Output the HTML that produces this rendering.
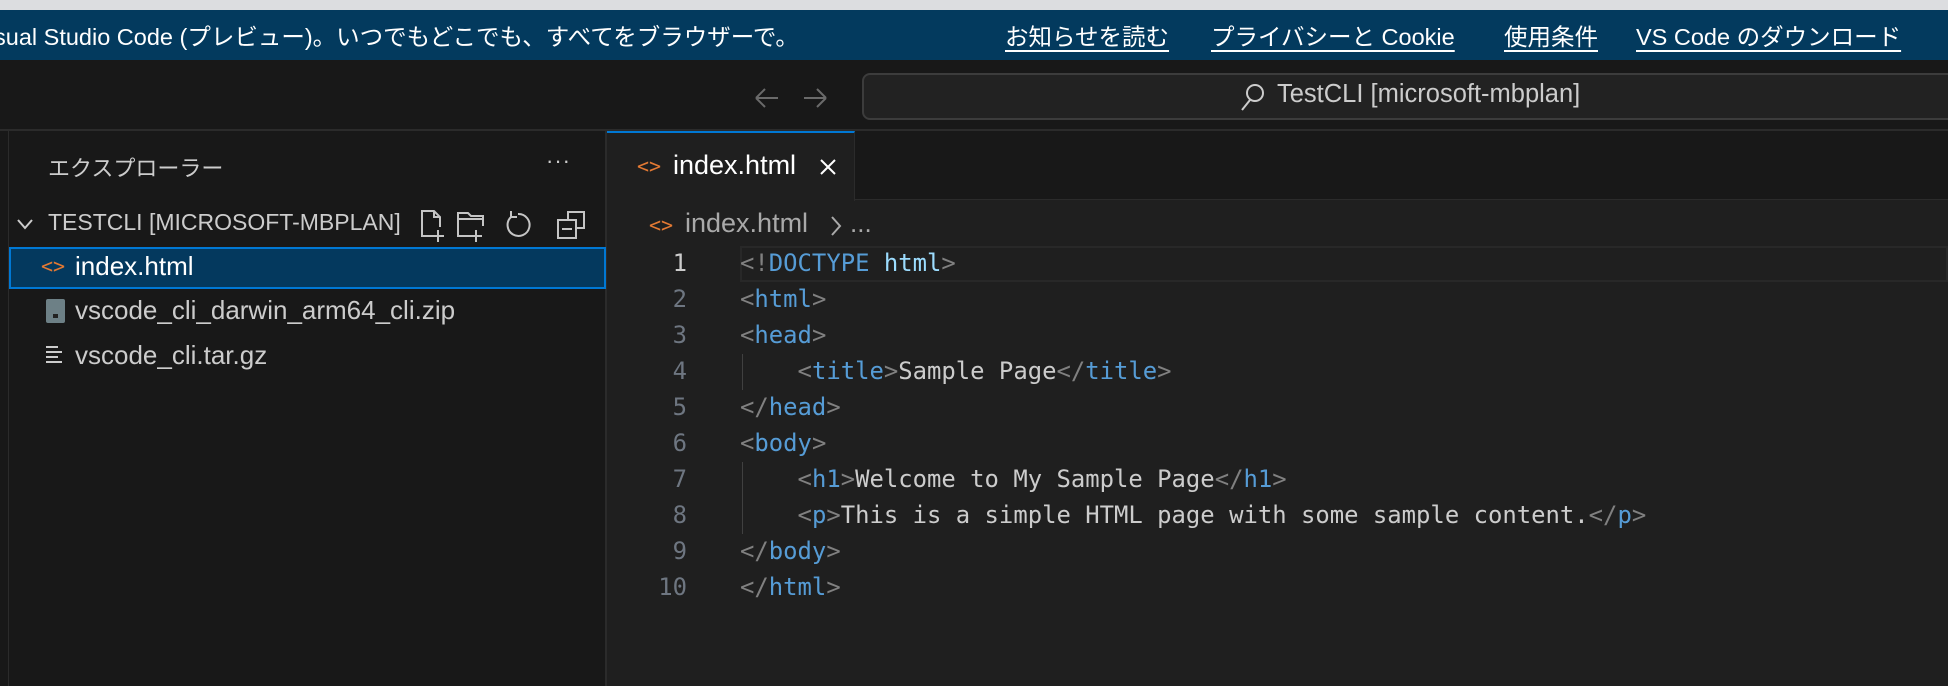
<!DOCTYPE html>
<html><head><meta charset="utf-8"><style>
*{margin:0;padding:0;box-sizing:border-box}
body{width:1948px;height:686px;overflow:hidden;background:#181818;font-family:"Liberation Sans","Noto Sans CJK JP",sans-serif;position:relative;color:#ccc}
.a{position:absolute;white-space:pre}
.mono{font-family:"DejaVu Sans Mono","Liberation Mono",monospace;font-size:23.9px}
.p{color:#808080}.t{color:#569cd6}.at{color:#9cdcfe}.x{color:#cccccc}
.ln{position:absolute;left:600px;width:87px;text-align:right;color:#6e7681}
.cl{position:absolute;left:740px}
.bl{font-size:23.5px;color:#fff;text-decoration:underline;text-underline-offset:5px;top:18px}
</style></head><body>
<div class="a" style="left:0;top:0;width:1948px;height:10px;background:#dcdde0"></div>
<div class="a" style="left:0;top:10px;width:1948px;height:50px;background:#033a5e"></div>
<div class="a" style="left:-6px;top:18px;font-size:23.5px;color:#fff">sual Studio Code (プレビュー)。いつでもどこでも、すべてをブラウザーで。</div>
<div class="a bl" style="left:1005px">お知らせを読む</div>
<div class="a bl" style="left:1211px">プライバシーと Cookie</div>
<div class="a bl" style="left:1504px">使用条件</div>
<div class="a bl" style="left:1636px">VS Code のダウンロード</div>
<div class="a" style="left:0;top:129px;width:1948px;height:2px;background:#2b2b2b"></div>
<svg class="a" style="left:752px;top:84px" width="80" height="28" viewBox="0 0 80 28" fill="none" stroke="#6a6a6a" stroke-width="2"><path d="M4 14h22M4 14l9-9M4 14l9 9"/><path d="M52 14h22M74 14l-9-9M74 14l-9 9"/></svg>
<div class="a" style="left:862px;top:73px;width:1100px;height:47px;background:#222;border:2px solid #3c3c3c;border-radius:8px"></div>
<svg class="a" style="left:1240px;top:82px" width="26" height="30" viewBox="0 0 26 30" fill="none" stroke="#ccc" stroke-width="2"><circle cx="15" cy="11" r="8"/><path d="M10 18L2 28"/></svg>
<div class="a" style="left:1277px;top:80px;font-size:25.5px;color:#ccc">TestCLI [microsoft-mbplan]</div>
<div class="a" style="left:8px;top:131px;width:1px;height:555px;background:#2b2b2b"></div>
<div class="a" style="left:605px;top:131px;width:2px;height:555px;background:#2b2b2b"></div>
<div class="a" style="left:48px;top:151px;font-size:22px;color:#ccc">エクスプローラー</div>
<div class="a" style="left:546px;top:148px;font-size:22px;color:#ccc;letter-spacing:1px">···</div>
<svg class="a" style="left:16px;top:217px" width="18" height="14" viewBox="0 0 18 14" fill="none" stroke="#ccc" stroke-width="2"><path d="M2 3l7 8 7-8"/></svg>
<div class="a" style="left:48px;top:209px;font-size:23px;color:#ccc">TESTCLI [MICROSOFT-MBPLAN]</div>
<svg class="a" style="left:418px;top:208px" width="180" height="36" viewBox="0 0 180 36" fill="none" stroke="#c5c5c5" stroke-width="2"><path d="M16 28H4V3h12l6 6v10M16 3v6h6M20 22v12M14 28h12"/><path d="M48 28H52H40V5h10l3 3h12v10M40 11h25M58 22v12M52 28h12"/><path d="M100 6a11 11 0 1 1-7 3M93 3v6h6"/><path d="M140 12h10v-8h16v16h-8M140 12h18v18h-18zM144 21h10"/></svg>
<div class="a" style="left:9px;top:247px;width:597px;height:42px;background:#04395e;border:2px solid #0078d4"></div>
<div class="a" style="left:41px;top:254px;font-size:20px;color:#e37933;font-family:'DejaVu Sans Mono',monospace">&lt;&gt;</div>
<div class="a" style="left:75px;top:251px;font-size:26px;color:#fff">index.html</div>
<div class="a" style="left:46px;top:299px;width:19px;height:24px;background:#6d8086;border-radius:2px"></div>
<div class="a" style="left:53px;top:314px;width:5px;height:4px;background:#222"></div>
<div class="a" style="left:75px;top:295px;font-size:26px;color:#ccc">vscode_cli_darwin_arm64_cli.zip</div>
<svg class="a" style="left:45px;top:345px" width="20" height="20" viewBox="0 0 20 20" stroke="#ccc" stroke-width="2"><path d="M1 2h12M1 7h16M1 12h12M1 17h16"/></svg>
<div class="a" style="left:75px;top:340px;font-size:26px;color:#ccc">vscode_cli.tar.gz</div>
<div class="a" style="left:607px;top:200px;width:1341px;height:486px;background:#1f1f1f"></div>
<div class="a" style="left:607px;top:131px;width:248px;height:70px;background:#1f1f1f;border-top:2px solid #0078d4;border-right:1px solid #2b2b2b"></div>
<div class="a" style="left:855px;top:199px;width:1093px;height:1px;background:#2b2b2b"></div>
<div class="a" style="left:637px;top:154px;font-size:20px;color:#e37933;font-family:'DejaVu Sans Mono',monospace">&lt;&gt;</div>
<div class="a" style="left:673px;top:150px;font-size:27px;color:#fff">index.html</div>
<svg class="a" style="left:818px;top:157px" width="20" height="20" viewBox="0 0 20 20" stroke="#fff" stroke-width="2"><path d="M3 3l14 14M17 3L3 17"/></svg>
<div class="a" style="left:649px;top:213px;font-size:20px;color:#e37933;font-family:'DejaVu Sans Mono',monospace">&lt;&gt;</div>
<div class="a" style="left:685px;top:208px;font-size:27px;color:#a9a9a9">index.html</div>
<svg class="a" style="left:829px;top:215px" width="14" height="22" viewBox="0 0 14 22" fill="none" stroke="#a9a9a9" stroke-width="2"><path d="M3 2l8 9-8 9"/></svg>
<div class="a" style="left:850px;top:208px;font-size:26px;color:#a9a9a9">...</div>
<div class="a" style="left:740px;top:246px;width:1208px;height:36px;border:2px solid #282828"></div>
<div class="a" style="left:742px;top:354px;width:1px;height:36px;background:#404040"></div>
<div class="a" style="left:742px;top:462px;width:1px;height:72px;background:#404040"></div>
<div class="mono">
<div class="ln" style="top:249px;color:#ccc">1</div>
<div class="ln" style="top:285px">2</div>
<div class="ln" style="top:321px">3</div>
<div class="ln" style="top:357px">4</div>
<div class="ln" style="top:393px">5</div>
<div class="ln" style="top:429px">6</div>
<div class="ln" style="top:465px">7</div>
<div class="ln" style="top:501px">8</div>
<div class="ln" style="top:537px">9</div>
<div class="ln" style="top:573px">10</div>
<div class="cl a" style="top:249px"><span class="p">&lt;!</span><span class="t">DOCTYPE</span> <span class="at">html</span><span class="p">&gt;</span></div>
<div class="cl a" style="top:285px"><span class="p">&lt;</span><span class="t">html</span><span class="p">&gt;</span></div>
<div class="cl a" style="top:321px"><span class="p">&lt;</span><span class="t">head</span><span class="p">&gt;</span></div>
<div class="cl a" style="top:357px">    <span class="p">&lt;</span><span class="t">title</span><span class="p">&gt;</span><span class="x">Sample Page</span><span class="p">&lt;/</span><span class="t">title</span><span class="p">&gt;</span></div>
<div class="cl a" style="top:393px"><span class="p">&lt;/</span><span class="t">head</span><span class="p">&gt;</span></div>
<div class="cl a" style="top:429px"><span class="p">&lt;</span><span class="t">body</span><span class="p">&gt;</span></div>
<div class="cl a" style="top:465px">    <span class="p">&lt;</span><span class="t">h1</span><span class="p">&gt;</span><span class="x">Welcome to My Sample Page</span><span class="p">&lt;/</span><span class="t">h1</span><span class="p">&gt;</span></div>
<div class="cl a" style="top:501px">    <span class="p">&lt;</span><span class="t">p</span><span class="p">&gt;</span><span class="x">This is a simple HTML page with some sample content.</span><span class="p">&lt;/</span><span class="t">p</span><span class="p">&gt;</span></div>
<div class="cl a" style="top:537px"><span class="p">&lt;/</span><span class="t">body</span><span class="p">&gt;</span></div>
<div class="cl a" style="top:573px"><span class="p">&lt;/</span><span class="t">html</span><span class="p">&gt;</span></div>
</div>
</body></html>
